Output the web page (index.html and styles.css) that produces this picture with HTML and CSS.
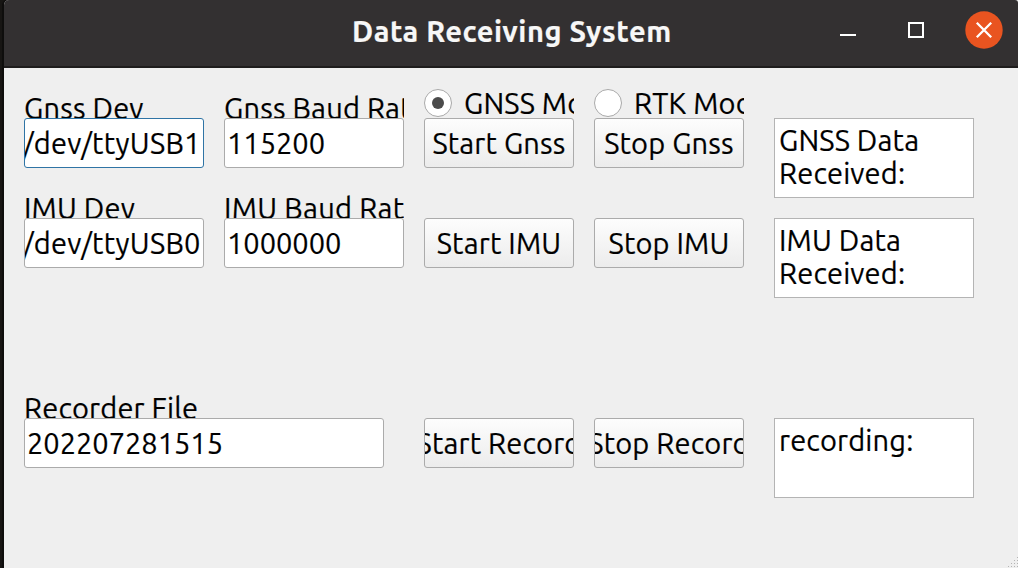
FILE: index.html
```html
<!DOCTYPE html>
<html lang="en">
<head>
<meta charset="utf-8">
<title>Data Receiving System</title>
<link rel="stylesheet" href="styles.css">
</head>
<body>
<div class="window">
  <header class="titlebar">
    <h1 class="title">Data Receiving System</h1>
    <div class="controls">
      <svg class="control" width="38" height="38" viewBox="0 0 38 38"><path d="M11 24h16" stroke="#fff" stroke-width="2"/></svg>
      <svg class="control" width="38" height="38" viewBox="0 0 38 38"><rect x="12" y="12" width="14" height="14" fill="none" stroke="#fff" stroke-width="2"/></svg>
      <svg class="control" width="38" height="38" viewBox="0 0 38 38"><circle cx="19" cy="19" r="18.7" fill="#e95420"/><path d="M11.8 11.8l14.4 14.4M26.2 11.8L11.8 26.2" stroke="#fff" stroke-width="2.3"/></svg>
    </div>
  </header>
  <main class="content">
    <div class="form">
      <div class="row">
        <div class="cell narrow"><div class="caption"><span>Gnss Dev</span></div><div class="field focused"><span class="path">/dev/ttyUSB1</span></div></div>
        <div class="cell narrow"><div class="caption"><span>Gnss Baud Rate</span></div><div class="field"><span class="number">115200</span></div></div>
        <div class="cell action"><div class="radio"><i class="dot checked"></i><span>GNSS Mode</span></div><div class="button"><span>Start Gnss</span></div></div>
        <div class="cell action"><div class="radio"><i class="dot"></i><span>RTK Mode</span></div><div class="button"><span>Stop Gnss</span></div></div>
      </div>
      <div class="row">
        <div class="cell narrow"><div class="caption"><span>IMU Dev</span></div><div class="field"><span class="path">/dev/ttyUSB0</span></div></div>
        <div class="cell narrow"><div class="caption"><span class="baud">IMU Baud Rate</span></div><div class="field"><span class="number">1000000</span></div></div>
        <div class="cell action"><div class="button"><span>Start IMU</span></div></div>
        <div class="cell action"><div class="button"><span>Stop IMU</span></div></div>
      </div>
      <div class="row recorder">
        <div class="cell wide"><div class="caption"><span>Recorder File</span></div><div class="field"><span class="number">202207281515</span></div></div>
        <div class="cell action"><div class="button"><span>Start Record</span></div></div>
        <div class="cell action"><div class="button"><span>Stop Record</span></div></div>
      </div>
    </div>
    <div class="displays">
      <div class="display">GNSS Data<br>Received:</div>
      <div class="display">IMU Data<br>Received:</div>
      <div class="display last">recording:</div>
    </div>
  </main>
  <svg class="grip" width="10" height="11" viewBox="0 0 10 11" fill="#b4b4b4"><path d="M9 0h1v1h-1zM6 3h1v1h-1zM9 3h1v1h-1zM3 6h1v1h-1zM6 6h1v1h-1zM9 6h1v1h-1zM0 9h1v1h-1zM3 9h1v1h-1zM6 9h1v1h-1zM9 9h1v1h-1z"/></svg>
</div>
</body>
</html>
```
FILE: styles.css
```css
* { box-sizing: border-box; }
body {
  margin: 0;
  background: #171513;
  font: 29px/40px "Ubuntu", "Noto Sans", sans-serif;
  letter-spacing: 0.18px;
  -webkit-text-stroke: 0.2px;
  color: #000;
  overflow: hidden;
}
.window {
  position: relative;
  height: 568px;
  margin-left: 4px;
  background: #efefef;
  box-shadow: -2px 0 0 #0e0d0c;
  border-top-left-radius: 5px;
}
.titlebar {
  display: flex;
  align-items: center;
  height: 68px;
  padding: 0 15px 6px 348px;
  background: #333031;
  border-bottom: 2px solid #1f1d1d;
  border-radius: 5px 3px 0 0;
}
.title {
  flex: 1;
  margin: 0;
  padding-top: 2px;
  font-size: 29px;
  letter-spacing: 0.55px;
  font-weight: 700;
  color: #f7f7f7;
  white-space: nowrap;
}
.controls { display: flex; gap: 30px; }
.control { display: block; }
.content {
  display: flex;
  gap: 30px;
  padding: 20px;
}
.form { width: 720px; }
.row { display: flex; gap: 20px; height: 100px; }
.recorder { margin-top: 100px; }
.cell {
  display: flex;
  flex-direction: column;
  justify-content: flex-end;
  height: 80px;
  white-space: nowrap;
}
.narrow { width: 180px; }
.wide { width: 360px; margin-right: 20px; }
.action { width: 150px; }
.caption { height: 30px; overflow: hidden; }
.field {
  height: 50px;
  padding: 4px 2px;
  border: 1px solid #ababab;
  border-radius: 3px;
  background: #fff;
  overflow: hidden;
}
.focused { border-color: #2f74a5; }
.button {
  display: flex;
  align-items: center;
  justify-content: center;
  height: 50px;
  border: 1px solid #ababab;
  border-radius: 3px;
  background: linear-gradient(#fdfdfd, #ececec);
  overflow: hidden;
}
.radio {
  display: flex;
  align-items: center;
  gap: 12px;
  height: 30px;
  overflow: hidden;
}
.dot {
  flex: none;
  display: flex;
  align-items: center;
  justify-content: center;
  width: 28px;
  height: 28px;
  border: 1px solid #a9a9a9;
  border-radius: 50%;
  background: #fff;
}
.checked::after {
  content: "";
  width: 12px;
  height: 12px;
  border-radius: 50%;
  background: #4b4b4b;
}
.displays {
  display: flex;
  flex-direction: column;
  gap: 20px;
  width: 200px;
  padding-top: 30px;
}
.display {
  height: 80px;
  padding: 5px 4px;
  border: 1px solid #b4b4b4;
  background: #fff;
  line-height: 33px;
}
.last { margin-top: 100px; }
.grip { position: absolute; right: 0; bottom: 0; }
.number { letter-spacing: -0.02px; }
.path { margin-left: -4px; letter-spacing: 0.3px; }
.baud { letter-spacing: 0.3px; }
```
